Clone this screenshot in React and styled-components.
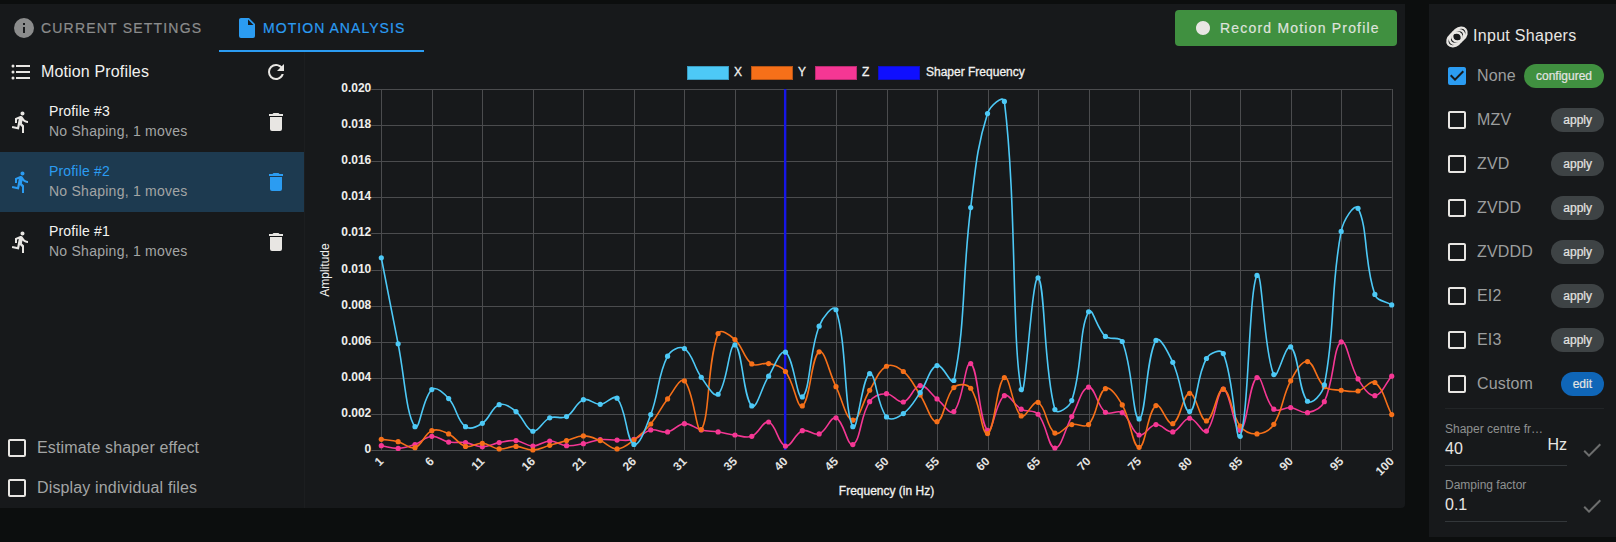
import React from "react";
import styled, { createGlobalStyle } from "styled-components";

const GlobalStyle = createGlobalStyle`
  html, body {
    margin: 0;
    padding: 0;
    background: #0c0e0e;
    font-family: "Liberation Sans", Arial, sans-serif;
  }
`;

const Page = styled.div`
  width: 1616px;
  height: 542px;
  overflow: hidden;
  box-sizing: border-box;
  padding-top: 4px;
  display: flex;
  align-items: flex-start;
  gap: 24px;
`;

const Card = styled.div`
  width: 1405px;
  height: 504px;
  background: #17191b;
  border-radius: 0 0 4px 0;
  display: flex;
  flex-direction: column;
`;

const TabBar = styled.div`
  height: 48px;
  display: flex;
  align-items: stretch;
  padding-right: 8px;
`;

const Tab = styled.div`
  display: flex;
  align-items: center;
  gap: ${(p) => (p.$active ? "4px" : "5px")};
  width: ${(p) => (p.$active ? "205px" : "219px")};
  height: 48px;
  box-sizing: border-box;
  padding: 2px 0 0 ${(p) => (p.$active ? "16px" : "12px")};
  font-size: 14px;
  letter-spacing: ${(p) => (p.$active ? "1.05px" : "1.2px")};
  -webkit-text-stroke: 0.2px;
  text-transform: uppercase;
  color: ${(p) => (p.$active ? "#2b9cf2" : "#8b8c8c")};
  border-bottom: 2px solid ${(p) => (p.$active ? "#2b9cf2" : "transparent")};
`;

const RecordButton = styled.div`
  margin: 6px 0 0 auto;
  width: 222px;
  height: 36px;
  box-sizing: border-box;
  padding-left: 16px;
  background: #409040;
  border-radius: 4px;
  display: flex;
  align-items: center;
  gap: 5px;
  color: #dfe3dc;
  font-size: 14px;
  letter-spacing: 1.2px;
  -webkit-text-stroke: 0.2px;
`;

const Body = styled.div`
  flex: 1;
  display: flex;
  min-height: 0;
`;

const Sidebar = styled.div`
  width: 304px;
  border-right: 1px solid #1c1e20;
  display: flex;
  flex-direction: column;
`;

const SideHead = styled.div`
  height: 40px;
  box-sizing: border-box;
  padding: 0 16px 1px 9px;
  display: flex;
  align-items: center;
  gap: 8px;
  color: #f2f2f0;
  font-size: 16px;
  letter-spacing: 0.15px;
`;

const SideTitle = styled.span`
  flex: 1;
`;

const ProfileRow = styled.div`
  height: 60px;
  box-sizing: border-box;
  padding: 0 16px 0 9px;
  display: flex;
  align-items: center;
  background: ${(p) => (p.$active ? "#1d3a50" : "transparent")};
  color: ${(p) => (p.$active ? "#2b9cf2" : "#e8e6e3")};
`;

const ProfileText = styled.div`
  flex: 1;
  margin-left: 16px;
  padding-bottom: 2px;
`;

const ProfileName = styled.div`
  font-size: 14px;
  line-height: 20px;
  letter-spacing: 0.17px;
  color: ${(p) => (p.$active ? "#2b9cf2" : "#f4f4f2")};
`;

const ProfileSub = styled.div`
  font-size: 14px;
  line-height: 20px;
  letter-spacing: 0.25px;
  color: #a3a5a5;
`;

const Options = styled.div`
  margin-top: auto;
  padding-left: 5px;
  display: flex;
  flex-direction: column;
`;

const OptionRow = styled.div`
  height: 40px;
  display: flex;
  align-items: center;
  gap: 8px;
  font-size: 16px;
  letter-spacing: 0.15px;
  color: #a3a5a5;
`;

const ChartArea = styled.div`
  flex: 1;
  min-width: 0;
`;

const ChartSvg = styled.svg`
  display: block;
  font-family: "Liberation Sans", Arial, sans-serif;
  font-size: 12px;
`;

const ChartLabel = styled.text`
  fill: #f2f2f0;
  stroke: #f2f2f0;
  stroke-width: 0.3px;
`;

const Side = styled.div`
  width: 187px;
  height: 533px;
  box-sizing: border-box;
  background: #17191b;
  padding: 16px 12px 0 16px;
`;

const SideHeading = styled.div`
  height: 32px;
  margin-bottom: 2px;
  display: flex;
  align-items: center;
  gap: 4px;
  color: #e8e6e3;
  font-size: 16px;
  letter-spacing: 0.3px;
`;

const ShaperRow = styled.div`
  height: 44px;
  display: flex;
  align-items: center;
  gap: 8px;
  color: #9c9e9e;
  font-size: 16px;
  letter-spacing: 0.15px;
`;

const ShaperName = styled.span`
  flex: 1;
  white-space: nowrap;
`;

const Chip = styled.span`
  height: 24px;
  padding: 0 12px;
  border-radius: 12px;
  display: flex;
  align-items: center;
  font-size: 12px;
  letter-spacing: 0;
  -webkit-text-stroke: 0.2px;
  color: #e4e4e2;
  background: ${(p) => p.$bg || "#3e4345"};
`;

const Divider = styled.div`
  height: 1px;
  background: #222527;
  margin: 2px 0 1px;
`;

const FieldRow = styled.div`
  display: flex;
  align-items: flex-end;
  height: 56px;
  gap: 13px;
`;

const Field = styled.div`
  width: 122px;
  height: 56px;
  box-sizing: border-box;
  border-bottom: 1px solid #33373a;
  padding-top: 11px;
`;

const FieldLabel = styled.div`
  font-size: 12px;
  line-height: 16px;
  color: #8f9191;
  white-space: nowrap;
`;

const FieldValue = styled.div`
  font-size: 16px;
  line-height: 24px;
  color: #e8e6e3;
  display: flex;
  justify-content: space-between;
`;

const Suffix = styled.span`
  margin-top: -4px;
`;

const CheckWrap = styled.span`
  display: flex;
  margin-bottom: 4px;
`;

const Icon = ({ d, size = 24, color = "currentColor" }) => (
  <svg width={size} height={size} viewBox="0 0 24 24" fill={color} style={{ flexShrink: 0 }}>
    <path d={d} />
  </svg>
);

const mdi = {
  info: "M13,9H11V7H13M13,17H11V11H13M12,2A10,10 0 0,0 2,12A10,10 0 0,0 12,22A10,10 0 0,0 22,12A10,10 0 0,0 12,2Z",
  file: "M13,9V3.5L18.5,9M6,2C4.89,2 4,2.89 4,4V20A2,2 0 0,0 6,22H18A2,2 0 0,0 20,20V8L14,2H6Z",
  list: "M7,5H21V7H7V5M7,13V11H21V13H7M4,4.5A1.5,1.5 0 0,1 5.5,6A1.5,1.5 0 0,1 4,7.5A1.5,1.5 0 0,1 2.5,6A1.5,1.5 0 0,1 4,4.5M4,10.5A1.5,1.5 0 0,1 5.5,12A1.5,1.5 0 0,1 4,13.5A1.5,1.5 0 0,1 2.5,12A1.5,1.5 0 0,1 4,10.5M7,19V17H21V19H7M4,16.5A1.5,1.5 0 0,1 5.5,18A1.5,1.5 0 0,1 4,19.5A1.5,1.5 0 0,1 2.5,18A1.5,1.5 0 0,1 4,16.5Z",
  refresh: "M17.65,6.35C16.2,4.9 14.21,4 12,4A8,8 0 0,0 4,12A8,8 0 0,0 12,20C15.73,20 18.84,17.45 19.73,14H17.65C16.83,16.33 14.61,18 12,18A6,6 0 0,1 6,12A6,6 0 0,1 12,6C13.66,6 15.14,6.69 16.22,7.78L13,11H20V4L17.65,6.35Z",
  trash: "M19,4H15.5L14.5,3H9.5L8.5,4H5V6H19M6,19A2,2 0 0,0 8,21H16A2,2 0 0,0 18,19V7H6V19Z",
  run: "M13.5,5.5C14.59,5.5 15.5,4.58 15.5,3.5C15.5,2.38 14.59,1.5 13.5,1.5C12.39,1.5 11.5,2.38 11.5,3.5C11.5,4.58 12.39,5.5 13.5,5.5M9.89,19.38L10.89,15L13,16.89V23H15V15.5L12.89,13.5L13.5,10.5C14.79,12 16.79,13 19,13V11C17.09,11 15.5,10 14.69,8.58L13.69,7C13.29,6.38 12.69,6 12,6C11.69,6 11.5,6.08 11.19,6.08L6,8.28V13H8V9.58L9.79,8.88L8.19,17L3.29,16L2.89,18L9.89,19.38Z",
  record: "M19,12C19,15.86 15.86,19 12,19C8.14,19 5,15.86 5,12C5,8.14 8.14,5 12,5C15.86,5 19,8.14 19,12Z",
  box: "M19,3H5C3.89,3 3,3.89 3,5V19A2,2 0 0,0 5,21H19A2,2 0 0,0 21,19V5C21,3.89 20.1,3 19,3M19,5V19H5V5H19Z",
  boxOn: "M10,17L5,12L6.41,10.58L10,14.17L17.59,6.58L19,8M19,3H5C3.89,3 3,3.89 3,5V19A2,2 0 0,0 5,21H19A2,2 0 0,0 21,19V5C21,3.89 20.1,3 19,3Z",
  check: "M21,7L9,19L3.5,13.5L4.91,12.09L9,16.17L19.59,5.59L21,7Z",
};

const Rings = () => (
  <svg width="24" height="24" viewBox="0 0 24 24" fill="none" stroke="#e8e6e3" strokeWidth="2.3" style={{ flexShrink: 0, marginTop: 2 }}>
    <ellipse cx="9.6" cy="14.4" rx="8" ry="6" transform="rotate(-40 9.6 14.4)" />
    <ellipse cx="12" cy="12" rx="8" ry="6" transform="rotate(-40 12 12)" />
    <ellipse cx="14.4" cy="9.6" rx="8" ry="6" transform="rotate(-40 14.4 9.6)" />
  </svg>
);

// amplitudes in 1/1000, one point every 16.84px
const X = [10.65, 5.88, 1.29, 3.35, 2.85, 1.29, 1.48, 2.51, 2.13, 1.04, 1.78, 1.85, 2.79, 2.53, 2.87, 0.31, 1.96, 5.2, 5.62, 4.03, 3.09, 5.82, 2.44, 4.09, 5.42, 2.94, 6.86, 7.77, 1.29, 4.23, 1.83, 2.02, 3.18, 4.68, 3.85, 13.43, 18.64, 19.31, 3.35, 9.54, 2.24, 2.74, 7.66, 6.29, 6.01, 1.72, 6.07, 4.86, 2.13, 5.07, 5.34, 0.76, 9.67, 4.18, 5.71, 2.7, 3.61, 12.11, 13.39, 8.62, 8.04];
const Y = [0.59, 0.46, 0.13, 1.07, 0.89, 0.2, 0.37, 0.06, 0.2, 0, 0.26, 0.52, 0.78, 0.52, 0.06, 0.55, 1.44, 2.83, 3.83, 1.13, 6.45, 6.12, 4.77, 4.79, 4.35, 2.44, 5.44, 3.51, 1.65, 3.31, 4.64, 4.35, 3.05, 1.57, 3.46, 3.42, 0.91, 4.01, 1.89, 2.64, 0.94, 1.41, 1.41, 3.4, 2.5, 0.15, 2.46, 1.46, 3.14, 1.61, 3.37, 1.33, 0.89, 1.42, 3.83, 4.9, 3.51, 3.31, 3.27, 3.74, 1.96];
const Z = [0.24, 0.09, 0.3, 0.76, 0.44, 0.41, 0.18, 0.41, 0.52, 0.22, 0.5, 0.24, 0.35, 0.57, 0.55, 0.59, 1.11, 1.0, 1.46, 1.11, 1.0, 0.83, 0.76, 1.55, 0.22, 1.07, 0.89, 1.78, 0.3, 2.68, 3.12, 2.66, 3.57, 2.83, 2.13, 4.79, 1.09, 3.01, 2.26, 1.98, 0.11, 1.85, 3.48, 2.09, 2.07, 0.83, 1.41, 1.0, 1.76, 1.05, 3.37, 1.1, 4.01, 2.26, 2.35, 2.07, 2.68, 5.99, 3.94, 3.01, 4.09];

const xTicks = [1, 6, 11, 16, 21, 26, 31, 35, 40, 45, 50, 55, 60, 65, 70, 75, 80, 85, 90, 95, 100];
const yTicks = [0, 2, 4, 6, 8, 10, 12, 14, 16, 18, 20];

// svg starts at x=305, y=52 of the page
const LEFT = 76.3;
const RIGHT = 1086.7;
const TOP = 37;
const BOTTOM = 398;
const px = (i) => LEFT + ((RIGHT - LEFT) * i) / 60;
const py = (v) => BOTTOM - ((BOTTOM - TOP) * v) / 20;

const curvePath = (values) => {
  const pts = values.map((v, i) => [px(i), py(v)]);
  const cps = pts.map((p, i) => {
    const a = pts[i - 1] || p;
    const c = pts[i + 1] || p;
    const d01 = Math.hypot(p[0] - a[0], p[1] - a[1]);
    const d12 = Math.hypot(c[0] - p[0], c[1] - p[1]);
    const sum = d01 + d12 || 1;
    const fa = (0.4 * d01) / sum;
    const fb = (0.4 * d12) / sum;
    return {
      prev: [p[0] - fa * (c[0] - a[0]), p[1] - fa * (c[1] - a[1])],
      next: [p[0] + fb * (c[0] - a[0]), p[1] + fb * (c[1] - a[1])],
    };
  });
  let d = `M${pts[0][0]},${pts[0][1]}`;
  for (let i = 1; i < pts.length; i++) {
    d += `C${cps[i - 1].next[0]},${cps[i - 1].next[1]} ${cps[i].prev[0]},${cps[i].prev[1]} ${pts[i][0]},${pts[i][1]}`;
  }
  return d;
};

const Series = ({ values, color }) => (
  <g>
    <path d={curvePath(values)} fill="none" stroke={color} strokeWidth="1.6" />
    {values.map((v, i) => (
      <circle key={i} cx={px(i)} cy={py(v)} r="2.6" fill={color} />
    ))}
  </g>
);

const legend = [
  { label: "X", color: "#4dc9f6", edge: "#3a9dc2", x: 382.5, tx: 429 },
  { label: "Y", color: "#f67019", edge: "#b95515", x: 446.5, tx: 493 },
  { label: "Z", color: "#f53794", edge: "#bd2b72", x: 510.5, tx: 557 },
  { label: "Shaper Frequency", color: "#0f0fff", edge: "#0f0fc8", x: 573.5, tx: 621 },
];

const Chart = () => (
  <ChartSvg width="1100" height="452">
    {legend.map((l) => (
      <g key={l.label}>
        <rect x={l.x} y="14.5" width="41" height="13" fill={l.color} stroke={l.edge} />
        <ChartLabel x={l.tx} y="24">{l.label}</ChartLabel>
      </g>
    ))}
    {yTicks.map((v) => (
      <g key={v}>
        <line x1={LEFT - 10} x2={RIGHT} y1={Math.round(py(v)) + 0.5} y2={Math.round(py(v)) + 0.5} stroke="#4b4c4e" />
        <text x={LEFT - 10} y={py(v) + 3} textAnchor="end" fill="#eeeeec" fontWeight="700">
          {v === 0 ? "0" : (v / 1000).toFixed(3)}
        </text>
      </g>
    ))}
    {xTicks.map((t, i) => (
      <g key={t}>
        <line x1={Math.round(px(i * 3)) + 0.5} x2={Math.round(px(i * 3)) + 0.5} y1={TOP} y2={BOTTOM} stroke="#4b4c4e" />
        <text
          textAnchor="end"
          fill="#e4e4e2"
          fontWeight="700"
          transform={`translate(${px(i * 3) + 3} ${BOTTOM + 12}) rotate(-45)`}
        >
          {t}
        </text>
      </g>
    ))}
    <line x1={px(24) - 0.3} x2={px(24) - 0.3} y1={TOP} y2={BOTTOM} stroke="#1616e6" strokeWidth="2.4" />
    <Series values={Z} color="#f53794" />
    <Series values={Y} color="#f67019" />
    <Series values={X} color="#4dc9f6" />
    <ChartLabel x="581.5" y="443" textAnchor="middle">Frequency (in Hz)</ChartLabel>
    <text transform="translate(24 218) rotate(-90)" textAnchor="middle" fill="#f2f2f0">Amplitude</text>
  </ChartSvg>
);

const profiles = [
  { name: "Profile #3" },
  { name: "Profile #2", active: true },
  { name: "Profile #1" },
];

const shapers = [
  { name: "None", chip: "configured", bg: "#409040", on: true },
  { name: "MZV", chip: "apply" },
  { name: "ZVD", chip: "apply" },
  { name: "ZVDD", chip: "apply" },
  { name: "ZVDDD", chip: "apply" },
  { name: "EI2", chip: "apply" },
  { name: "EI3", chip: "apply" },
  { name: "Custom", chip: "edit", bg: "#0f66b8" },
];

export default function App() {
  return (
    <>
      <GlobalStyle />
      <Page>
        <Card>
          <TabBar>
            <Tab>
              <Icon d={mdi.info} />
              Current Settings
            </Tab>
            <Tab $active>
              <Icon d={mdi.file} />
              Motion Analysis
            </Tab>
            <RecordButton>
              <Icon d={mdi.record} color="#e8e6e3" />
              Record Motion Profile
            </RecordButton>
          </TabBar>
          <Body>
            <Sidebar>
              <SideHead>
                <Icon d={mdi.list} color="#e8e6e3" />
                <SideTitle>Motion Profiles</SideTitle>
                <Icon d={mdi.refresh} color="#e8e6e3" />
              </SideHead>
              {profiles.map((p) => (
                <ProfileRow key={p.name} $active={p.active}>
                  <Icon d={mdi.run} />
                  <ProfileText>
                    <ProfileName $active={p.active}>{p.name}</ProfileName>
                    <ProfileSub>No Shaping, 1 moves</ProfileSub>
                  </ProfileText>
                  <Icon d={mdi.trash} />
                </ProfileRow>
              ))}
              <Options>
                <OptionRow>
                  <Icon d={mdi.box} color="#e8e6e3" />
                  Estimate shaper effect
                </OptionRow>
                <OptionRow>
                  <Icon d={mdi.box} color="#e8e6e3" />
                  Display individual files
                </OptionRow>
              </Options>
            </Sidebar>
            <ChartArea>
              <Chart />
            </ChartArea>
          </Body>
        </Card>
        <Side>
          <SideHeading>
            <Rings />
            Input Shapers
          </SideHeading>
          {shapers.map((s) => (
            <ShaperRow key={s.name}>
              <Icon d={s.on ? mdi.boxOn : mdi.box} color={s.on ? "#2b9cf2" : "#e8e6e3"} />
              <ShaperName>{s.name}</ShaperName>
              <Chip $bg={s.bg}>{s.chip}</Chip>
            </ShaperRow>
          ))}
          <Divider />
          <FieldRow>
            <Field>
              <FieldLabel>Shaper centre fr…</FieldLabel>
              <FieldValue>
                40
                <Suffix>Hz</Suffix>
              </FieldValue>
            </Field>
            <CheckWrap>
              <Icon d={mdi.check} color="#6d6e6e" />
            </CheckWrap>
          </FieldRow>
          <FieldRow>
            <Field>
              <FieldLabel>Damping factor</FieldLabel>
              <FieldValue>0.1</FieldValue>
            </Field>
            <CheckWrap>
              <Icon d={mdi.check} color="#6d6e6e" />
            </CheckWrap>
          </FieldRow>
        </Side>
      </Page>
    </>
  );
}
